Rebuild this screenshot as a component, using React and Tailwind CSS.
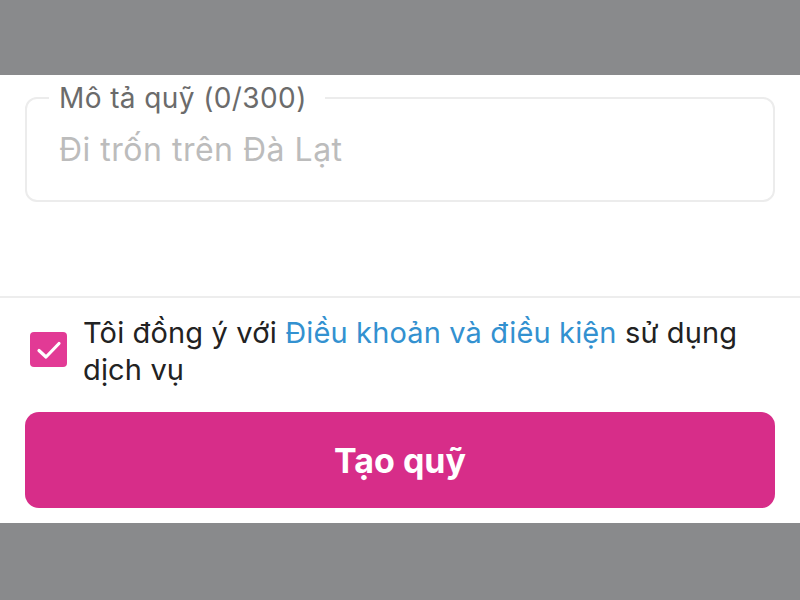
import React, { useState } from 'react';

function App() {
  const [agreed, setAgreed] = useState(true);

  return (
    <div className="h-[600px] w-[800px] bg-[#898a8c] flex flex-col font-['Inter',sans-serif]">
      {/* Top dim area */}
      <div className="h-[75px] shrink-0" />

      {/* Sheet */}
      <div className="h-[448px] shrink-0 bg-white flex flex-col">
        <div className="h-[221px] px-[25px] pt-[7px]">
          <fieldset className="h-[120px] rounded-[12px] border-2 border-[#ececec] px-[32px] pb-0 m-0">
            <legend className="-ml-[10px] pl-[10px] pr-[18px] text-[28px] leading-[32px] tracking-[0.4px] text-[#6b6b6b]">
              Mô tả quỹ (0/300)
            </legend>
            <div className="text-[32px] leading-[38px] tracking-[0.5px] text-[#bcbcbc] mt-[17px]">
              Đi trốn trên Đà Lạt
            </div>
          </fieldset>
        </div>

        <div className="h-[2px] bg-[#ededed]" />

        <div className="flex items-start px-[30px] pt-[16px]">
          <button
            onClick={() => setAgreed(!agreed)}
            className="mt-[18px] w-[37px] h-[35px] shrink-0 rounded-[4px] bg-[#e23a95] flex items-center justify-center"
          >
            {agreed && (
              <svg width="26" height="22" viewBox="0 0 26 22" fill="none">
                <path d="M3 11.5 L10 18 L23 4.5" stroke="white" strokeWidth="3.2" strokeLinecap="round" strokeLinejoin="round" />
              </svg>
            )}
          </button>
          <p className="ml-[16px] w-[670px] text-[29px] leading-[37px] tracking-[0.15px] text-[#222]">
            Tôi đồng ý với <span className="text-[#3391d0]">Điều khoản và điều kiện</span> sử dụng dịch vụ
          </p>
        </div>

        <div className="px-[25px] pt-[24px]">
          <button className="w-full h-[96px] rounded-[14px] bg-[#d72d89] text-white text-[34px] font-bold">
            Tạo quỹ
          </button>
        </div>
      </div>
    </div>
  );
}

export default App;
